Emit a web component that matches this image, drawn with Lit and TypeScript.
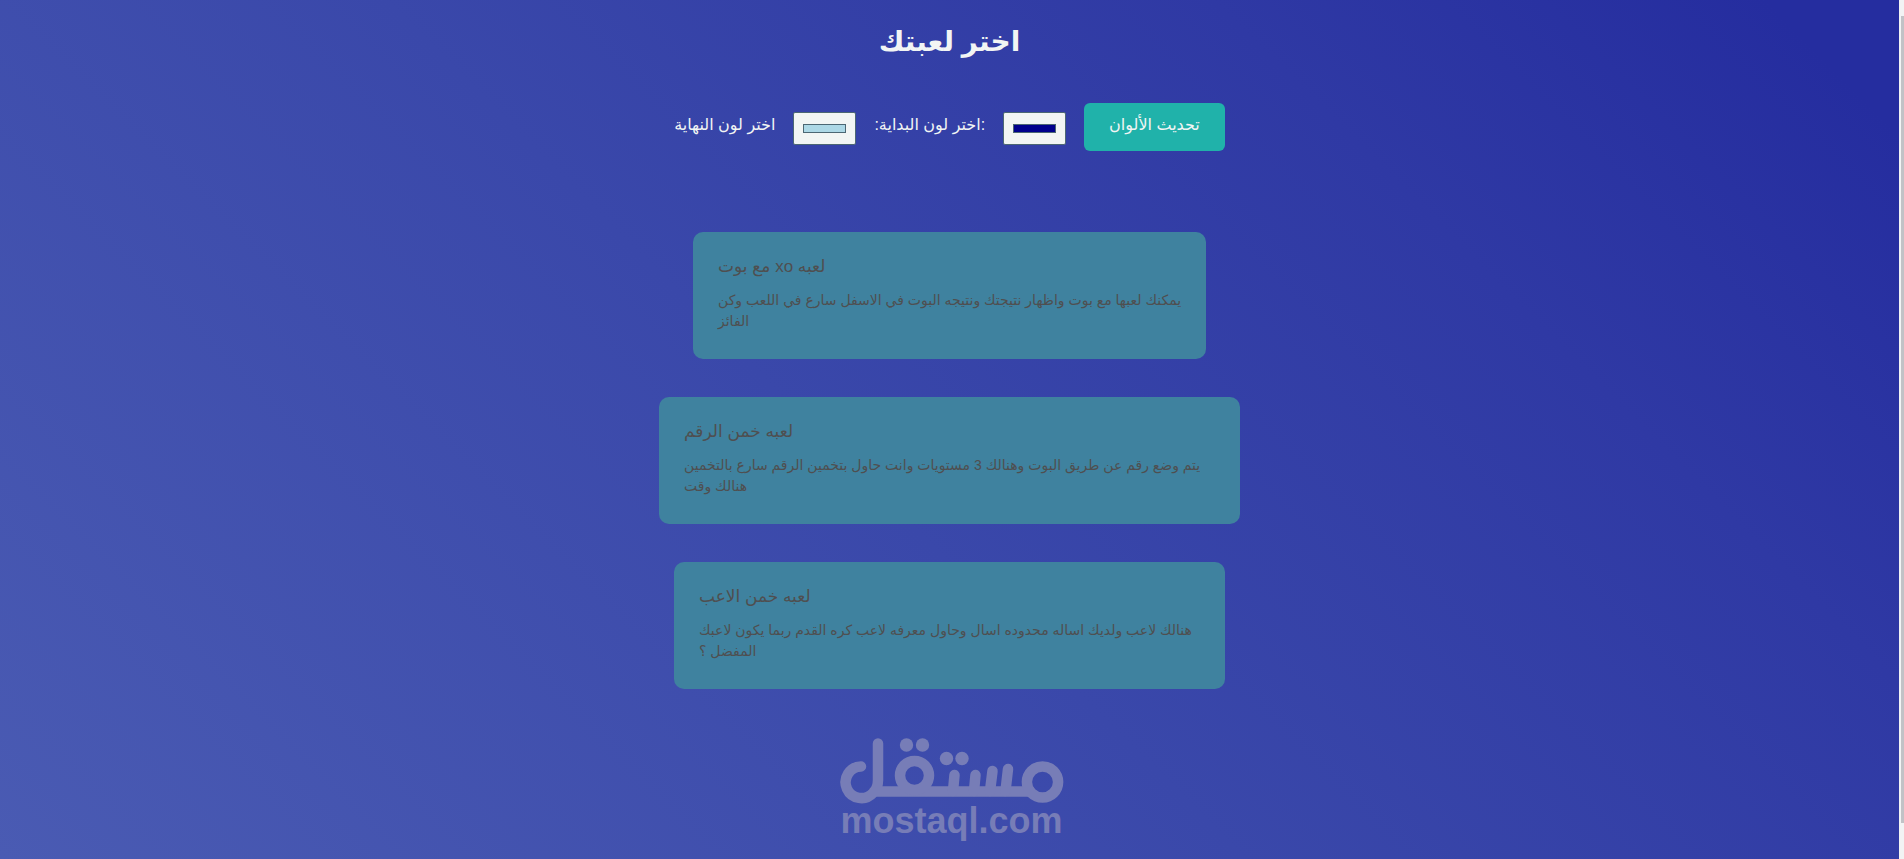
import { LitElement, html, css } from "lit";
import { customElement, state } from "lit/decorators.js";

interface Game {
  title: string;
  text: string;
  width: number;
}

const GAMES: Game[] = [
  { title: "لعبه xo مع بوت", text: "يمكنك لعبها مع بوت واظهار نتيجتك ونتيجه البوت في الاسفل سارع في اللعب وكن الفائز", width: 513 },
  { title: "لعبه خمن الرقم", text: "يتم وضع رقم عن طريق البوت وهنالك 3 مستويات وانت حاول بتخمين الرقم سارع بالتخمين هنالك وقت", width: 581 },
  { title: "لعبه خمن الاعب", text: "هنالك لاعب ولديك اساله محدوده اسال وحاول معرفه لاعب كره القدم ربما يكون لاعبك المفضل ؟", width: 551 },
];

@customElement("app-root")
export class AppRoot extends LitElement {
  @state() private startColor = "#00008b";
  @state() private endColor = "#add8e6";

  static styles = css`
    :host {
      display: grid;
      grid-template-columns: minmax(0, 1fr) 5px;
      min-height: 100vh;
      background: linear-gradient(45deg, #4a5bb3, #3a48aa 45%, #2f39a4 75%, #252d9f 95%);
      color: #f2f5f4;
      font-family: "Liberation Sans", "DejaVu Sans", sans-serif;
    }
    * { box-sizing: border-box; }
    main {
      display: flex;
      flex-direction: column;
      align-items: center;
    }
    h1 {
      margin: 22px 0 0;
      font-size: 28px;
      line-height: 40px;
    }
    .controls {
      display: flex;
      align-items: center;
      gap: 18px;
      margin-top: 41px;
      font-size: 16px;
      line-height: 20px;
    }
    .controls label { padding-bottom: 4px; white-space: nowrap; }
    .controls input {
      width: 63px;
      height: 33px;
      margin: 2px 0 0;
      padding: 7px;
      border: 1px solid #4c6773;
      border-radius: 2px;
      background: #f2f5f4;
    }
    .controls input::-webkit-color-swatch { border: 1px solid #4c6773; }
    .controls button {
      height: 48px;
      padding: 0 25px 4px;
      border: 0;
      border-radius: 6px;
      background: #20b2aa;
      color: inherit;
      font: inherit;
      white-space: nowrap;
    }
    .games {
      display: flex;
      flex-direction: column;
      align-items: center;
      gap: 38px;
      width: 100%;
      margin-top: 81px;
    }
    .card {
      max-width: 96%;
      min-height: 127px;
      padding: 24px 16px 20px 25px;
      border-radius: 10px;
      background: #3f829f;
      color: #4f4f50;
      direction: rtl;
      text-align: left;
    }
    h2 {
      margin: 0 0 12px;
      font-size: 17px;
      font-weight: 400;
      line-height: 22px;
    }
    p {
      margin: 0;
      font-size: 14px;
      line-height: 21px;
    }
    .brand {
      display: flex;
      flex-direction: column;
      align-items: center;
      margin-top: 49px;
      padding-left: 4px;
      color: #777db7;
    }
    .brand svg { display: block; }
    .brand span {
      font-size: 36px;
      font-weight: 700;
      line-height: 34px;
    }
    .track {
      display: flex;
      justify-content: flex-end;
      padding: 16px 0 36px;
      background: #f2f3f4;
    }
    .thumb { width: 3px; background: #c1c2c6; }
  `;

  render() {
    return html`
      <main>
        <h1>اختر لعبتك</h1>
        <div class="controls">
          <label for="end">اختر لون النهاية</label>
          <input id="end" type="color" .value=${this.endColor}
            @input=${(e: Event) => (this.endColor = (e.target as HTMLInputElement).value)} />
          <label for="start">:اختر لون البداية:</label>
          <input id="start" type="color" .value=${this.startColor}
            @input=${(e: Event) => (this.startColor = (e.target as HTMLInputElement).value)} />
          <button type="button">تحديث الألوان</button>
        </div>
        <section class="games">
          ${GAMES.map((g) => html`
            <article class="card" style="width:${g.width}px">
              <h2>${g.title}</h2>
              <p>${g.text}</p>
            </article>`)}
        </section>
        <div class="brand">
          <svg width="224" height="66" viewBox="0 0 224 66" fill="none" stroke="currentColor" stroke-width="10.5" stroke-linecap="round" aria-hidden="true">
            <path d="M21 28.500A15.800 15.800 0 1 0 33 55Q38 50.500 38 42V5.500M34 53.500H190" />
            <circle cx="74.500" cy="37.500" r="14.500" />
            <circle cx="202.500" cy="44" r="15.600" />
            <path d="M113 53L114.500 37M134 53L135.500 37M150 53L152.500 33M165.500 53L168 31" />
            <g fill="currentColor" stroke="none">
              <circle cx="66.500" cy="7" r="6.700" />
              <circle cx="82.500" cy="7" r="6.700" />
              <circle cx="106.500" cy="20.500" r="6.700" />
              <circle cx="122" cy="20.500" r="6.700" />
            </g>
          </svg>
          <span>mostaql.com</span>
        </div>
      </main>
      <div class="track"><div class="thumb"></div></div>
    `;
  }
}
